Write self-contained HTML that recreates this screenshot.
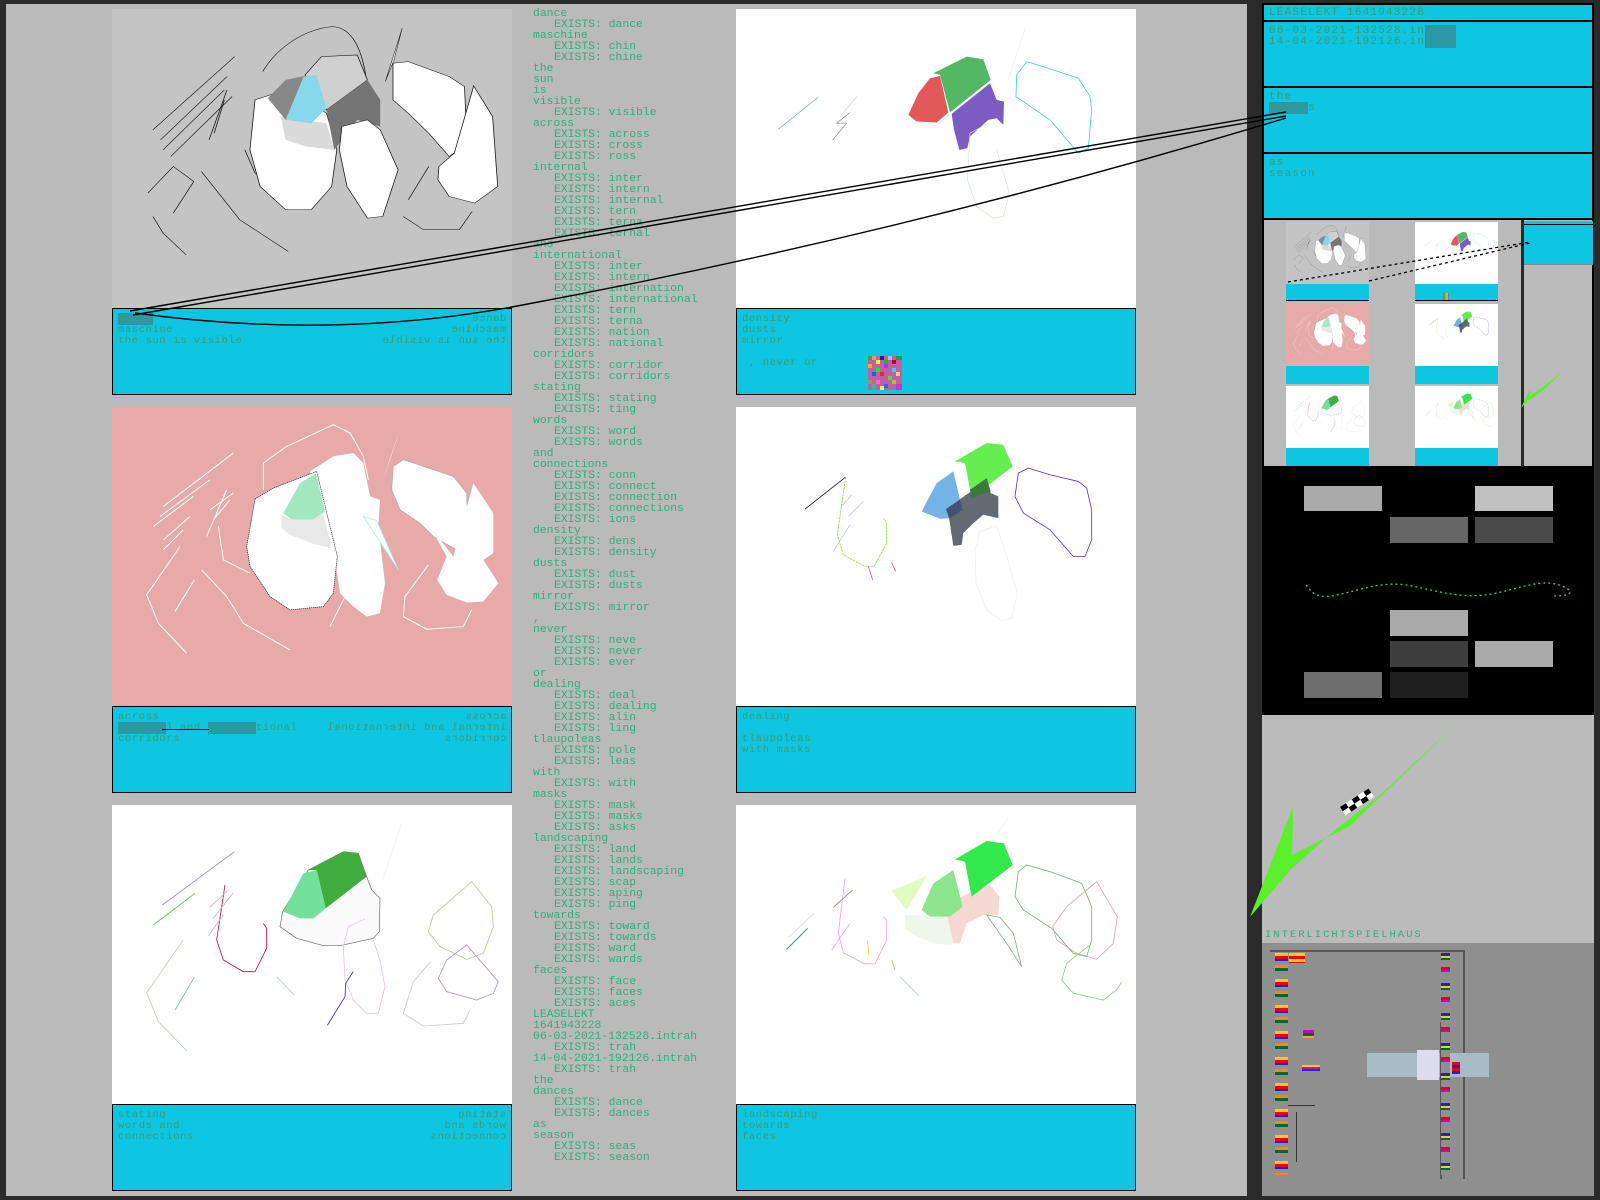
<!DOCTYPE html>
<html><head><meta charset="utf-8">
<style>
*{margin:0;padding:0;box-sizing:border-box}
body{width:1600px;height:1200px;background:#2a2a2a;position:relative;overflow:hidden;font-family:"Liberation Mono",monospace}
.a{position:absolute}
.cap{position:absolute;background:#0ec5e2;border:1.5px solid #000;font-size:10.5px;line-height:11px;color:#3c9c70;padding:5px 5px;letter-spacing:0.6px;white-space:pre;overflow:hidden}
.cap .r{position:absolute;right:5px;top:5px;text-align:left;transform:scaleX(-1)}
.hl{background:#2a97ab}
#col{position:absolute;left:533px;top:9px;font-size:11.4px;line-height:11px;color:#2db07e;white-space:pre}
#col div.i{padding-left:21px}
.sb{position:absolute;left:1262px;width:332px;background:#0ec5e2;border:2px solid #000;font-size:11px;line-height:11px;color:#3c9c70;letter-spacing:1.2px;padding:4px 5px;white-space:pre}
</style></head><body>
<svg width="0" height="0" style="position:absolute">
<defs>
<symbol id="p1" viewBox="220 27 783 898" preserveAspectRatio="none">
<rect x="220" y="27" width="783" height="898" fill="#c4c4c4"/>
<g fill="none" stroke="#111" stroke-width="1.5">
<path d="M515,215 C540,150 590,90 650,80 C690,80 710,150 718,240"/>
<path d="M300,390 L460,170 M315,420 L445,230 M320,450 L440,270 M335,470 L455,290 M410,420 L445,270 M420,400 L440,300"/>
<path d="M290,580 L340,500 L380,545 M300,650 L320,700 L365,765 M395,515 L470,660 L565,755 M340,640 L380,545"/>
<path d="M480,450 L500,520 L520,540 M790,650 L830,690 L900,690 L925,635 M800,600 L840,500"/>
</g>
<path d="M500,300 L560,270 L640,340 L660,450 L650,560 L610,630 L560,630 L510,560 L490,450 Z" fill="#fff" stroke="#111" stroke-width="1.5"/>
<path d="M550,350 L640,370 L655,450 L600,440 L560,420 Z" fill="#dadada"/>
<path d="M525,295 L560,240 L598,228 L560,360 Z" fill="#888"/>
<path d="M598,225 L630,170 L700,165 L720,240 L640,330 Z" fill="#d0d0d0" stroke="#111" stroke-width="1.5"/>
<path d="M560,360 L595,230 L620,225 L640,325 L610,370 Z" fill="#87d8ea"/>
<path d="M640,330 L720,240 L745,300 L745,380 L700,360 L655,450 Z" fill="#757575"/>
<path d="M670,380 L720,360 L745,390 L780,510 L750,650 L720,655 L680,560 L665,450 Z" fill="#fff" stroke="#111" stroke-width="1.5"/>
<path d="M770,190 L800,185 L880,230 L910,260 L915,430 L880,470 L840,400 L800,340 L770,300 Z" fill="#fff" stroke="#111" stroke-width="1.5"/>
<path d="M860,500 L890,460 L928,258 L965,350 L975,560 L930,610 L880,590 L858,540 Z" fill="#fff" stroke="#111" stroke-width="1.5"/>
<path d="M755,245 L788,85 L772,180 Z" fill="#fff" stroke="#111"/>
</symbol>
<symbol id="p2" viewBox="18 27 1200 898" preserveAspectRatio="none">
<rect x="18" y="27" width="1200" height="898" fill="#fff"/>
<path d="M610,220 L710,170 L760,178 L782,240 L660,338 L630,225 Z" fill="#53b763"/>
<path d="M630,228 L655,338 L620,368 L560,365 L535,345 L565,280 L600,235 Z" fill="#e15858"/>
<path d="M665,342 L780,250 L800,300 L822,305 L820,375 L800,355 L775,360 L720,410 L712,445 L688,450 L672,390 Z" fill="#7a5cc2"/>
<g fill="none">
<path d="M890,185 L860,225 L858,290 L960,360 L1045,460 L1075,445 L1085,330 L1080,290 L1045,235 L940,200 Z" stroke="#3ad6cc" stroke-width="2.5"/>
<path d="M775,370 L720,400 L712,540 L740,620 L790,655 L820,650 L838,580 L800,450" stroke="#c8eec8" stroke-width="2"/>
<path d="M145,388 L265,292" stroke="#4aa8d8" stroke-width="2"/>
<path d="M360,338 L320,370 L350,370 L308,420" stroke="#888" stroke-width="2"/>
<path d="M330,350 L380,290" stroke="#f0c0c8" stroke-width="2"/>
<path d="M835,240 L885,85" stroke="#f4e4ea" stroke-width="2"/>
</g>
</symbol>
<symbol id="p3" viewBox="36 22 1200 896" preserveAspectRatio="none">
<rect x="36" y="22" width="1200" height="896" fill="#e8a9a9"/>
<g fill="none" stroke="#fff" stroke-width="3">
<path d="M490,270 L490,190 L560,140 L700,75 L750,100 L790,170 L805,240"/>
<path d="M190,320 L400,160 M180,350 L330,240 M160,380 L280,290 M190,420 L270,350 M190,450 L250,390 M330,330 L400,280 M340,360 L390,300 M320,410 L380,270"/>
<path d="M240,440 L140,585 L175,670 L260,760 M225,635 L283,540 M305,510 L380,590 L430,670 L570,750 M355,380 L370,480 L450,520"/>
<path d="M690,680 L735,590 M985,495 L915,590 L910,650 L980,688 L1090,680 L1115,630"/>
</g>
<path d="M630,215 L700,170 L760,160 L790,190 L810,290 L840,300 L835,380 L855,550 L840,640 L800,650 L760,620 L720,580 L705,480 Z" fill="#fff"/>
<path d="M465,298 L520,265 L650,215 L712,470 L700,580 L670,620 L570,630 L510,590 L450,500 L440,440 Z" fill="#fff" stroke="#222" stroke-width="2" stroke-dasharray="4 2"/>
<path d="M550,340 L600,250 L648,220 L675,335 L640,360 L575,360 Z" fill="#a3e9bf"/>
<path d="M545,345 L575,360 L640,360 L670,340 L695,445 L640,432 L570,405 L545,385 Z" fill="#e8e8e8"/>
<path d="M880,200 L910,180 L1060,230 L1100,280 L1105,430 L1070,450 L1000,410 L960,370 L900,330 L875,270 Z" fill="#fff" stroke="#aaa" stroke-width="2"/>
<path d="M990,380 L1060,470 L1120,250 L1180,340 L1180,460 L1150,480 L1195,550 L1150,605 L1100,608 L1040,585 L1012,540 L1040,470 Z" fill="#fff"/>
<path d="M850,240 L905,75 L872,170 Z" fill="#fff"/>
<path d="M790,350 L830,362 L895,510 Z" fill="#fff" stroke="#9ee" stroke-width="2"/>
</symbol>
<symbol id="p4" viewBox="48 22 1200 896" preserveAspectRatio="none">
<rect x="48" y="22" width="1200" height="896" fill="#fff"/>
<path d="M705,185 L800,130 L850,135 L878,200 L755,295 L735,190 Z" fill="#66ee50"/>
<path d="M605,335 L650,250 L700,215 L720,300 L680,330 L690,355 L660,357 Z" fill="#73b3e6"/>
<path d="M678,328 L760,270 L800,235 L812,280 L835,290 L835,355 L790,345 L760,370 L730,400 L725,435 L700,438 L688,360 Z" fill="#646a72"/>
<path d="M678,328 L720,300 L728,330 L690,355 Z" fill="#3e5470"/>
<path d="M750,270 L800,235 L812,275 L755,295 Z" fill="#3c7a3c"/>
<g fill="none" stroke-width="2.5">
<path d="M925,205 L895,220 L885,290 L910,340 L990,390 L1060,470 L1095,470 L1115,420 L1115,330 L1100,265 L1075,245 L990,225 Z" stroke="#6a2ad0"/>
<path d="M255,328 L377,232" stroke="#123" />
<path d="M377,232 L352,405 L370,465 L435,500 L462,500 L500,430 L500,370 L490,355" stroke="#88e840" stroke-dasharray="8 2"/>
<path d="M830,378 L780,395 L765,450 L768,550 L800,630 L845,662 L875,655 L892,580 L860,470 Z" stroke="#e4f0ee" stroke-width="2"/>
<path d="M395,285 L365,320 M390,375 L340,455 M430,305 L385,350" stroke="#c4b8e8" stroke-width="2"/>
<path d="M515,488 L527,515" stroke="#e06040"/>
<path d="M445,500 L458,540" stroke="#e040e0"/>
</g>
</symbol>
<symbol id="p5" viewBox="36 15 1200 897" preserveAspectRatio="none">
<rect x="36" y="15" width="1200" height="897" fill="#fff"/>
<path d="M625,210 L730,155 L775,160 L800,230 L815,270 L840,295 L838,395 L820,415 L720,437 L670,437 L590,415 L540,380 L548,335 Z" fill="#fafafa" stroke="#666" stroke-width="2"/>
<path d="M625,210 L730,155 L775,160 L800,230 L677,325 L650,210 Z" fill="#40ad40"/>
<path d="M550,335 L610,220 L650,210 L677,325 L640,355 L600,355 Z" fill="#73e09b"/>
<g fill="none" stroke-width="2.5">
<path d="M187,315 L403,155" stroke="#a080e0"/>
<path d="M160,375 L285,280" stroke="#50d030"/>
<path d="M375,255 L350,420 L370,480 L430,515 L465,515 L500,445 L500,385 L490,370" stroke="#c01040"/>
<path d="M250,420 L140,578 L175,665 L260,752" stroke="#b0d8b0"/>
<path d="M225,630 L283,532" stroke="#80b0d0"/>
<path d="M330,322 L385,270 M340,355 L400,278 M325,408 L370,345" stroke="#bbb"/>
<path d="M795,357 L745,380 L730,440 L735,540 L760,600 L800,640 L835,640 L855,560 L840,480 L820,420" stroke="#ecc0f4"/>
<path d="M682,676 L735,590 L737,550 L760,515" stroke="#4020c0"/>
<path d="M1115,245 L1000,345 L985,395 L1020,440 L1100,478 L1150,460 L1180,380 L1175,320 Z" stroke="#b0d090"/>
<path d="M1100,435 L1040,480 L1015,535 L1040,575 L1130,600 L1180,580 L1195,545 Z" stroke="#b090e8"/>
<path d="M990,487 L940,545 L910,640 L970,678 L1090,670 L1110,630" stroke="#ccc"/>
<path d="M530,530 L583,585" stroke="#b0c8f0"/>
<path d="M850,235 L905,70" stroke="#f0f0e0"/>
</g>
</symbol>
<symbol id="p6" viewBox="48 15 1200 897" preserveAspectRatio="none">
<rect x="48" y="15" width="1200" height="897" fill="#fff"/>
<path d="M555,345 L600,345 L640,355 L690,345 L700,435 L640,430 L580,405 L555,385 Z" fill="#eef7ea"/>
<path d="M515,272 L620,228 L560,330 Z" fill="#e0fcc0"/>
<path d="M678,320 L760,270 L810,255 L838,290 L835,345 L790,345 L740,370 L720,430 L700,430 L685,360 Z" fill="#f5d8d2"/>
<path d="M605,330 L640,250 L700,210 L728,320 L690,350 L630,350 Z" fill="#8de68d"/>
<path d="M705,178 L800,123 L852,130 L878,195 L755,290 L735,185 Z" fill="#33e84a"/>
<g fill="none" stroke-width="2.5">
<path d="M920,195 L895,215 L885,290 L910,330 L995,385 L1060,460 L1100,470 L1115,420 L1115,320 L1085,250 L990,215 Z" stroke="#70b870"/>
<path d="M1130,245 L1040,320 L998,380 L1010,420 L1070,460 L1130,478 L1180,430 L1192,350 Z" stroke="#e8a0a8"/>
<path d="M1110,435 L1040,490 L1025,540 L1060,580 L1150,600 L1190,570 L1205,545" stroke="#7cdc7c"/>
<path d="M800,345 L840,352 L880,400 L905,500 L860,430 Z" stroke="#78b878"/>
<path d="M375,235 L355,400 L370,458 L430,490 L465,492 L500,420 L500,360 L490,350" stroke="#f0a0f0"/>
<path d="M205,412 L283,340" stroke="#dcd8f8"/>
<path d="M200,448 L263,385" stroke="#208080"/>
<path d="M340,322 L398,270" stroke="#a08070"/>
<path d="M390,370 L335,450" stroke="#f0a0f0"/>
<path d="M540,530 L597,588" stroke="#b0d8d0"/>
<path d="M442,422 L447,465" stroke="#f0d020"/>
<path d="M515,480 L525,510" stroke="#d8b060"/>
<path d="M825,115 L865,50" stroke="#e8f8f0"/>
</g>
</symbol>
</defs></svg>

<div class="a" style="left:6px;top:4px;width:1241px;height:1192px;background:#bababa"></div>

<svg class="a" style="left:112px;top:9px" width="400" height="299"><use href="#p1" width="400" height="299"/></svg>
<svg class="a" style="left:736px;top:9px" width="400" height="299"><use href="#p2" width="400" height="299"/></svg>
<svg class="a" style="left:112px;top:407px" width="400" height="299"><use href="#p3" width="400" height="299"/></svg>
<svg class="a" style="left:736px;top:407px" width="400" height="299"><use href="#p4" width="400" height="299"/></svg>
<svg class="a" style="left:112px;top:805px" width="400" height="299"><use href="#p5" width="400" height="299"/></svg>
<svg class="a" style="left:736px;top:805px" width="400" height="299"><use href="#p6" width="400" height="299"/></svg>

<div class="cap" style="left:112px;top:308px;width:400px;height:87px"><span class="hl">dance</span>
maschine
the sun is visible<div class="r">dance
maschine
the sun is visible</div></div>
<div class="cap" style="left:736px;top:308px;width:400px;height:87px">density
dusts
mirror

 , never or</div>
<svg class="a" style="left:868px;top:356px" width="34" height="34">
<g>
<rect width="34" height="34" fill="#c060a0"/>
<rect x="0" y="0" width="4" height="4" fill="#3a3"/><rect x="4" y="0" width="4" height="4" fill="#e8a"/><rect x="8" y="4" width="4" height="4" fill="#ff0"/><rect x="12" y="0" width="4" height="4" fill="#228"/><rect x="16" y="4" width="4" height="4" fill="#0c0"/><rect x="20" y="0" width="4" height="4" fill="#8cf"/><rect x="24" y="4" width="4" height="4" fill="#c00"/><rect x="28" y="0" width="6" height="4" fill="#393"/>
<rect x="0" y="8" width="4" height="4" fill="#fa0"/><rect x="8" y="12" width="4" height="4" fill="#0f0"/><rect x="16" y="8" width="4" height="4" fill="#a3f"/><rect x="24" y="12" width="4" height="4" fill="#3cf"/><rect x="4" y="16" width="4" height="4" fill="#06f"/><rect x="12" y="16" width="4" height="4" fill="#c33"/><rect x="20" y="20" width="4" height="4" fill="#6c6"/><rect x="28" y="16" width="4" height="4" fill="#fc6"/>
<rect x="0" y="24" width="4" height="4" fill="#8a3"/><rect x="8" y="24" width="4" height="4" fill="#f6c"/><rect x="16" y="28" width="4" height="4" fill="#36c"/><rect x="24" y="24" width="4" height="4" fill="#9c3"/><rect x="4" y="28" width="4" height="6" fill="#4aa"/><rect x="28" y="28" width="6" height="6" fill="#c3c"/><rect x="12" y="30" width="4" height="4" fill="#fe6"/>
</g></svg>
<div class="cap" style="left:112px;top:706px;width:400px;height:87px">across
<span class="hl">interna</span>l and <span class="hl">interna</span>tional
corridors<div class="r">across
internal and international
corridors</div></div>
<div class="a" style="left:162px;top:729px;width:47px;height:1px;background:#000"></div>
<div class="cap" style="left:736px;top:706px;width:400px;height:87px">dealing

tlaupoleas
with masks</div>
<div class="cap" style="left:112px;top:1104px;width:400px;height:87px">stating
words and
connections<div class="r">stating
words and
connections</div></div>
<div class="cap" style="left:736px;top:1104px;width:400px;height:87px">landscaping
towards
faces</div>

<div id="col"><div>dance</div><div class="i">EXISTS: dance</div><div>maschine</div><div class="i">EXISTS: chin</div><div class="i">EXISTS: chine</div><div>the</div><div>sun</div><div>is</div><div>visible</div><div class="i">EXISTS: visible</div><div>across</div><div class="i">EXISTS: across</div><div class="i">EXISTS: cross</div><div class="i">EXISTS: ross</div><div>internal</div><div class="i">EXISTS: inter</div><div class="i">EXISTS: intern</div><div class="i">EXISTS: internal</div><div class="i">EXISTS: tern</div><div class="i">EXISTS: terna</div><div class="i">EXISTS: ternal</div><div>and</div><div>international</div><div class="i">EXISTS: inter</div><div class="i">EXISTS: intern</div><div class="i">EXISTS: internation</div><div class="i">EXISTS: international</div><div class="i">EXISTS: tern</div><div class="i">EXISTS: terna</div><div class="i">EXISTS: nation</div><div class="i">EXISTS: national</div><div>corridors</div><div class="i">EXISTS: corridor</div><div class="i">EXISTS: corridors</div><div>stating</div><div class="i">EXISTS: stating</div><div class="i">EXISTS: ting</div><div>words</div><div class="i">EXISTS: word</div><div class="i">EXISTS: words</div><div>and</div><div>connections</div><div class="i">EXISTS: conn</div><div class="i">EXISTS: connect</div><div class="i">EXISTS: connection</div><div class="i">EXISTS: connections</div><div class="i">EXISTS: ions</div><div>density</div><div class="i">EXISTS: dens</div><div class="i">EXISTS: density</div><div>dusts</div><div class="i">EXISTS: dust</div><div class="i">EXISTS: dusts</div><div>mirror</div><div class="i">EXISTS: mirror</div><div>,</div><div>never</div><div class="i">EXISTS: neve</div><div class="i">EXISTS: never</div><div class="i">EXISTS: ever</div><div>or</div><div>dealing</div><div class="i">EXISTS: deal</div><div class="i">EXISTS: dealing</div><div class="i">EXISTS: alin</div><div class="i">EXISTS: ling</div><div>tlaupoleas</div><div class="i">EXISTS: pole</div><div class="i">EXISTS: leas</div><div>with</div><div class="i">EXISTS: with</div><div>masks</div><div class="i">EXISTS: mask</div><div class="i">EXISTS: masks</div><div class="i">EXISTS: asks</div><div>landscaping</div><div class="i">EXISTS: land</div><div class="i">EXISTS: lands</div><div class="i">EXISTS: landscaping</div><div class="i">EXISTS: scap</div><div class="i">EXISTS: aping</div><div class="i">EXISTS: ping</div><div>towards</div><div class="i">EXISTS: toward</div><div class="i">EXISTS: towards</div><div class="i">EXISTS: ward</div><div class="i">EXISTS: wards</div><div>faces</div><div class="i">EXISTS: face</div><div class="i">EXISTS: faces</div><div class="i">EXISTS: aces</div><div>LEASELEKT</div><div>1641943228</div><div>06-03-2021-132528.intrah</div><div class="i">EXISTS: trah</div><div>14-04-2021-192126.intrah</div><div class="i">EXISTS: trah</div><div>the</div><div>dances</div><div class="i">EXISTS: dance</div><div class="i">EXISTS: dances</div><div>as</div><div>season</div><div class="i">EXISTS: seas</div><div class="i">EXISTS: season</div></div>

<div class="sb" style="top:3px;height:19px;padding-top:3px">LEASELEKT 1641943228</div>
<div class="sb" style="top:20px;height:68px">06-03-2021-132528.in<span class="hl">trah</span>
14-04-2021-192126.in<span class="hl">trah</span></div>
<div class="sb" style="top:86px;height:68px">the
<span class="hl">dance</span>s</div>
<div class="sb" style="top:152px;height:68px">as
season</div>

<div class="a" style="left:1262px;top:219px;width:332px;height:249px;background:#bababa;border:2px solid #000;border-top-width:1px"></div>
<svg class="a" style="left:1286px;top:222px" width="83" height="62"><use href="#p1" width="83" height="62"/></svg>
<svg class="a" style="left:1415px;top:222px" width="83" height="62"><use href="#p2" width="83" height="62"/></svg>
<svg class="a" style="left:1286px;top:304px" width="83" height="62"><use href="#p3" width="83" height="62"/></svg>
<svg class="a" style="left:1415px;top:304px" width="83" height="62"><use href="#p4" width="83" height="62"/></svg>
<svg class="a" style="left:1286px;top:386px" width="83" height="62"><use href="#p5" width="83" height="62"/></svg>
<svg class="a" style="left:1415px;top:386px" width="83" height="62"><use href="#p6" width="83" height="62"/></svg>
<div class="a" style="left:1286px;top:284px;width:83px;height:17px;background:#0ec5e2;border-bottom:1px solid #000"></div>
<div class="a" style="left:1415px;top:284px;width:83px;height:17px;background:#0ec5e2;border-bottom:1px solid #000"></div>
<div class="a" style="left:1443px;top:293px;width:6px;height:7px;background:linear-gradient(90deg,#c3c,#3c3,#fc0,#36f)"></div>
<div class="a" style="left:1286px;top:366px;width:83px;height:18px;background:#0ec5e2"></div>
<div class="a" style="left:1415px;top:366px;width:83px;height:18px;background:#0ec5e2"></div>
<div class="a" style="left:1286px;top:448px;width:83px;height:18px;background:#0ec5e2"></div>
<div class="a" style="left:1415px;top:448px;width:83px;height:18px;background:#0ec5e2"></div>
<div class="a" style="left:1521px;top:220px;width:3px;height:247px;background:#2a2a2a"></div>
<div class="a" style="left:1524px;top:221px;width:69px;height:44px;background:#0ec5e2;border-bottom:1px solid #888"></div>
<div class="a" style="left:1524px;top:224px;width:69px;height:1px;background:#000"></div>
<svg class="a" style="left:1262px;top:219px" width="338" height="250">
<path d="M26,63 L268,23 M107,62 L268,24" stroke="#000" stroke-width="1.3" stroke-dasharray="3 3" fill="none"/>
<path d="M259,189 L268,170 L268,177 L285,165 L300,153 L283,170 L266,182 Z" fill="#5af02a"/>
</svg>

<div class="a" style="left:1262px;top:468px;width:332px;height:247px;background:#000"></div>
<div class="a" style="left:1304px;top:486px;width:78px;height:25px;background:#aaa"></div>
<div class="a" style="left:1475px;top:486px;width:78px;height:25px;background:#c0c0c0"></div>
<div class="a" style="left:1390px;top:517px;width:78px;height:26px;background:#666"></div>
<div class="a" style="left:1475px;top:517px;width:78px;height:26px;background:#4a4a4a"></div>
<div class="a" style="left:1390px;top:610px;width:78px;height:26px;background:#aaa"></div>
<div class="a" style="left:1390px;top:641px;width:78px;height:26px;background:#3e3e3e"></div>
<div class="a" style="left:1475px;top:641px;width:78px;height:26px;background:#aaa"></div>
<div class="a" style="left:1304px;top:672px;width:78px;height:26px;background:#6e6e6e"></div>
<div class="a" style="left:1390px;top:672px;width:78px;height:26px;background:#1e1e1e"></div>
<svg class="a" style="left:1262px;top:468px" width="332" height="247">
<path d="M44,117 C50,125 55,130 70,128 C100,122 120,112 150,118 C180,124 200,131 230,126 C260,120 280,110 300,118 C310,122 315,128 290,128" fill="none" stroke="#2bd07a" stroke-width="1.3" stroke-dasharray="2 3"/>
</svg>

<div class="a" style="left:1262px;top:715px;width:332px;height:228px;background:#bbbbbb"></div>
<svg class="a" style="left:1240px;top:715px" width="360" height="228">
<path d="M10,202 L53,92 L52,140 L110,111 L213,12 L140,80 L95,115 L50,155 Z" fill="#5af02a"/>
<g transform="translate(100,92) rotate(-33)"><rect x="0" y="0" width="34" height="10" fill="#fff"/><rect x="0" y="0" width="7" height="5" fill="#000"/><rect x="7" y="5" width="7" height="5" fill="#000"/><rect x="14" y="0" width="7" height="5" fill="#000"/><rect x="21" y="5" width="7" height="5" fill="#000"/><rect x="28" y="0" width="6" height="5" fill="#000"/></g>
</svg>
<div class="a" style="left:1265px;top:929px;font-size:10.5px;color:#2db07e;letter-spacing:2px">INTERLICHTSPIELHAUS</div>

<div class="a" style="left:1262px;top:943px;width:332px;height:253px;background:#8f8f8f"></div>
<div class="a" style="left:1270px;top:950px;width:195px;height:229px;border-top:2px solid #555;border-right:2px solid #555"></div>
<div class="a" style="left:1367px;top:1053px;width:122px;height:24px;background:#a9bcc4"></div>
<div class="a" style="left:1417px;top:1050px;width:22px;height:30px;background:#dde"></div>
<div class="a" style="left:1440px;top:1022px;width:2px;height:157px;background:#555"></div>
<div class="a" style="left:1275px;top:1105px;width:40px;height:1px;background:#333"></div>
<div class="a" style="left:1296px;top:1112px;width:1px;height:50px;background:#333"></div>
<div class="a" style="left:1275px;top:953px;width:13px;height:222px;background:repeating-linear-gradient(180deg,#fc0 0 3px,#e01 3px 6px,#22c 6px 8px,#8f8f8f 8px 12px,#f80 12px 15px,#063 15px 18px,#8f8f8f 18px 26px)"></div>
<div class="a" style="left:1289px;top:953px;width:16px;height:10px;background:repeating-linear-gradient(180deg,#fc0 0 3px,#e01 3px 6px)"></div>
<div class="a" style="left:1302px;top:1065px;width:18px;height:6px;background:repeating-linear-gradient(180deg,#fc0 0 2px,#c0c 2px 4px,#22c 4px 6px)"></div>
<div class="a" style="left:1303px;top:1030px;width:11px;height:8px;background:repeating-linear-gradient(180deg,#c0c 0 3px,#063 3px 6px,#fa0 6px 8px)"></div>
<div class="a" style="left:1441px;top:953px;width:9px;height:222px;background:repeating-linear-gradient(180deg,#22c 0 3px,#fc0 3px 5px,#063 5px 7px,#8f8f8f 7px 14px,#e01 14px 17px,#c0c 17px 19px,#8f8f8f 19px 30px)"></div>
<div class="a" style="left:1452px;top:1062px;width:8px;height:12px;background:repeating-linear-gradient(180deg,#e01 0 3px,#22c 3px 6px)"></div>

<svg class="a" style="left:0;top:0" width="1600" height="1200">
<g fill="none" stroke="#000" stroke-width="1.4">
<path d="M130,311 L1286,112"/>
<path d="M133,315 L1286,116"/>
<path d="M135,313 Q330,340 512,307 Q900,235 1286,118"/>
</g>
</svg>
</body></html>
